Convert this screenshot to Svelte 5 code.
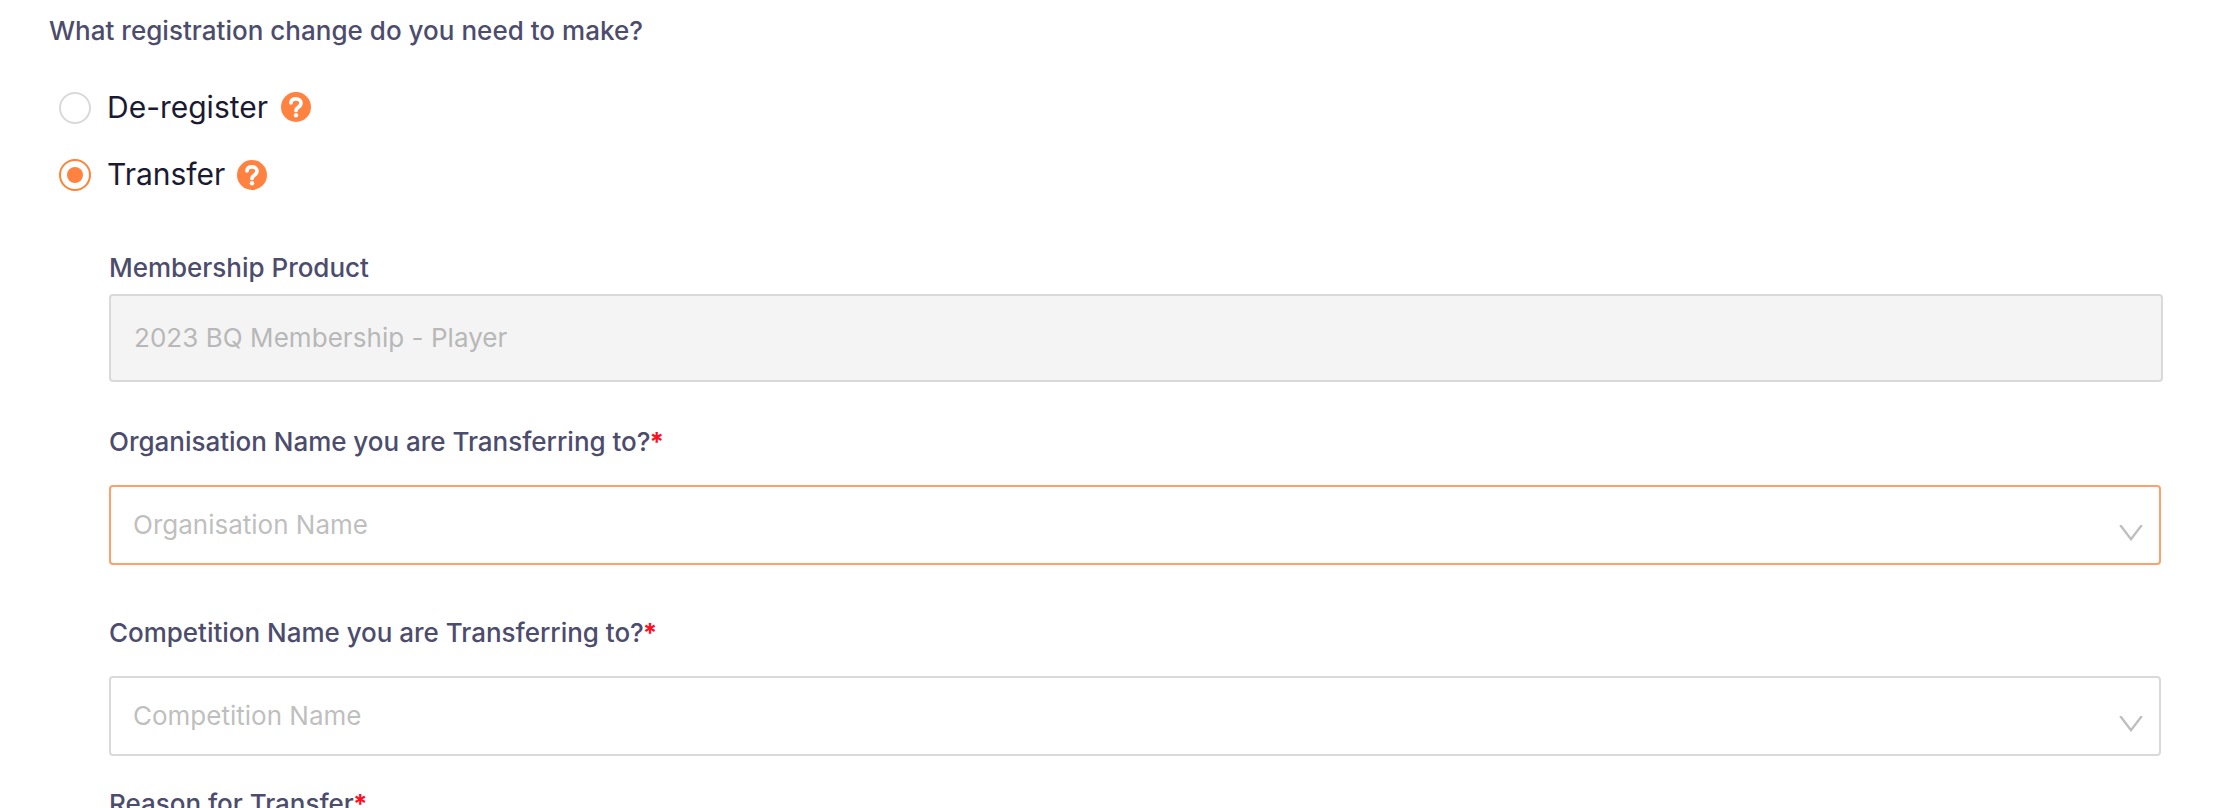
<script>
  let change = $state('transfer');

  const options = [
    { value: 'deregister', label: 'De-register' },
    { value: 'transfer', label: 'Transfer' },
  ];

  const selects = [
    { label: 'Organisation Name you are Transferring to?', placeholder: 'Organisation Name', active: true },
    { label: 'Competition Name you are Transferring to?', placeholder: 'Competition Name', active: false },
  ];
</script>

<main class="form">
  <h1 class="label question">What registration change do you need to make?</h1>

  <div class="options" role="radiogroup">
    {#each options as option}
      <div class="option">
        <button
          class="radio"
          class:checked={change === option.value}
          role="radio"
          aria-checked={change === option.value}
          aria-label={option.label}
          onclick={() => (change = option.value)}
        ></button>
        <span class="option-label">{option.label}</span>
        <svg class="help {option.value}" viewBox="0 0 30 30" aria-hidden="true">
          <circle cx="15" cy="15" r="15" />
          <path d="M10 10.900C10.100 8.400 12.100 6.900 15 6.900c3 0 5 1.700 5 4.100 0 2.100-1.100 3.100-2.700 4.200-1.700 1.100-2.300 1.800-2.300 3.200" />
          <circle class="dot" cx="15" cy="23.200" r="2.200" />
        </svg>
      </div>
    {/each}
  </div>

  <div class="fields">
    <div class="label">Membership Product</div>
    <div class="input disabled">2023 BQ Membership - Player</div>

    <div class="selects">
      {#each selects as select}
        <div class="field">
          <div class="label">{select.label}<span class="required">*</span></div>
          <div class="input select" class:active={select.active}>
            <span class="placeholder">{select.placeholder}</span>
            <svg class="arrow" viewBox="0 0 24 16" aria-hidden="true">
              <path d="M1.200 0 12 14.200 22.800 0" />
            </svg>
          </div>
        </div>
      {/each}
    </div>

    <div class="label">Reason for Transfer<span class="required">*</span></div>
  </div>
</main>

<style>
  :global(body) {
    margin: 0;
    background: #fff;
  }

  .form {
    box-sizing: border-box;
    height: 808px;
    padding: 11px 71px 0 50px;
    overflow: hidden;
    font-family: Inter, 'Liberation Sans', sans-serif;
    font-size: 26px;
  }

  .label {
    height: 40px;
    margin: 0;
    font-size: 26px;
    font-weight: 500;
    line-height: 40px;
    letter-spacing: -0.02px;
    white-space: nowrap;
    color: #4c4c6d;
  }

  .question {
    margin-left: -1px;
    letter-spacing: 0.02px;
  }

  .required {
    margin-left: -1px;
    font-weight: 700;
    color: #ff0f1f;
  }

  .options {
    display: flex;
    flex-direction: column;
    gap: 27px;
    padding: 37px 0 0 9px;
  }

  .option {
    display: flex;
    align-items: center;
    height: 40px;
  }

  .radio {
    display: flex;
    align-items: center;
    justify-content: center;
    box-sizing: border-box;
    width: 32px;
    height: 32px;
    margin: 0;
    padding: 0;
    border: 2px solid #d9d9d9;
    border-radius: 50%;
    background: #fff;
    cursor: pointer;
  }

  .radio.checked {
    border-color: #ff8237;
  }

  .radio.checked::after {
    content: '';
    width: 16px;
    height: 16px;
    border-radius: 50%;
    background: #ff8241;
  }

  .option-label {
    margin: 0 0 2px 16px;
    font-size: 30px;
    line-height: 38px;
    color: #1a1a33;
  }

  .help {
    width: 30px;
    height: 30px;
    margin-left: 12px;
    fill: #ff8241;
  }

  .help.deregister {
    margin-bottom: 2px;
    margin-left: 13px;
  }

  .help path {
    fill: none;
    stroke: #fff;
    stroke-width: 3.700;
    stroke-linecap: round;
  }

  .help .dot {
    fill: #fff;
  }

  .fields {
    padding: 53px 0 0 59px;
  }

  .input {
    display: flex;
    align-items: center;
    box-sizing: border-box;
    height: 88px;
    padding: 0 23px 2px;
    border: 2px solid #d9d9d9;
    border-radius: 4px;
  }

  .input.disabled {
    margin: 6px 0 40px;
    background: #f4f4f4;
    letter-spacing: 0.05px;
    color: #b8b8b8;
  }

  .selects {
    display: flex;
    flex-direction: column;
    gap: 48px;
    margin-bottom: 28px;
  }

  .select {
    justify-content: space-between;
    height: 80px;
    margin: 23px 2px 0 0;
    padding: 0 16px 0 22px;
    color: #bfbfbf;
  }

  .select.active {
    border-color: #ff9f69;
  }

  .placeholder {
    margin-bottom: 2px;
  }

  .arrow {
    width: 24px;
    height: 16px;
    margin-top: 16px;
    fill: none;
    stroke: #bfbfbf;
    stroke-width: 2.4;
  }
</style>
